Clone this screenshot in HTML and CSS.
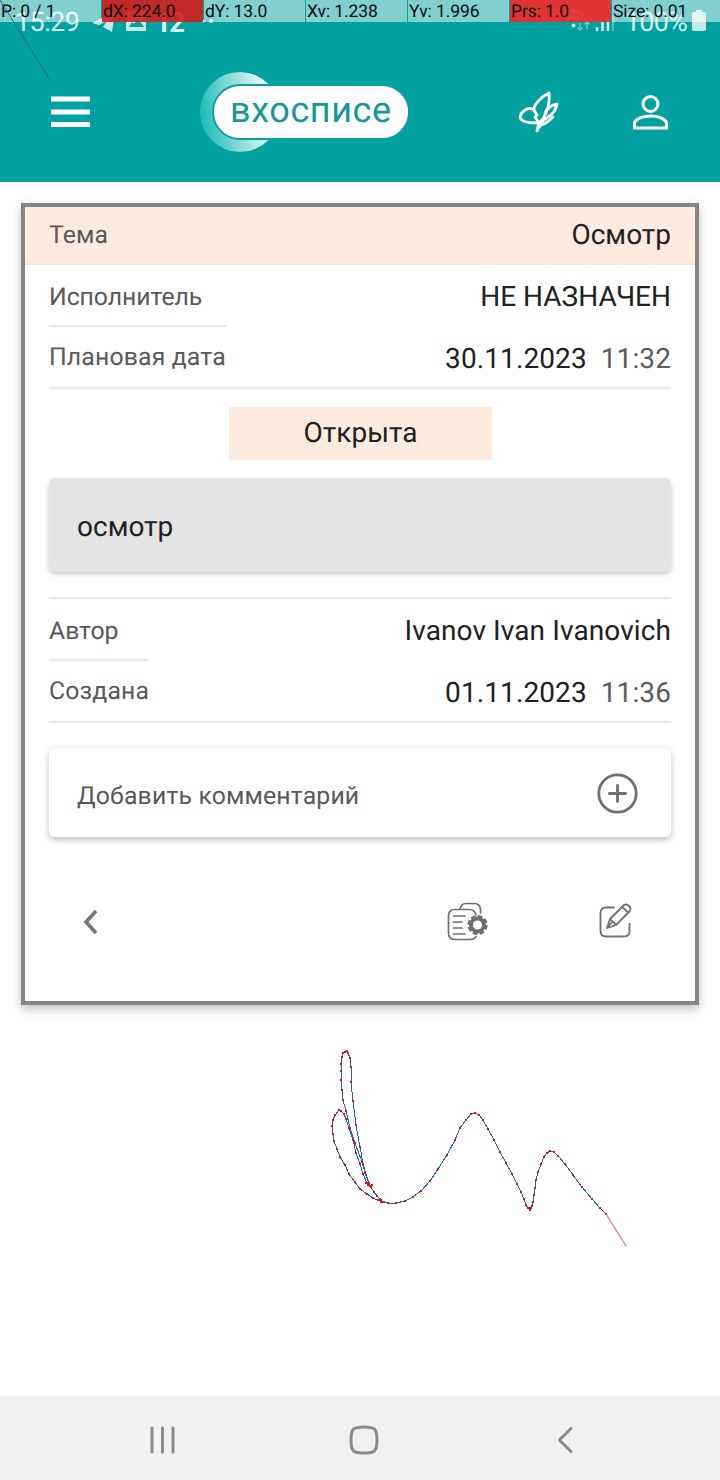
FILE: index.html
```html
<!DOCTYPE html>
<html lang="ru">
<head>
<meta charset="utf-8">
<title>вхосписе</title>
<link rel="stylesheet" href="styles.css">
</head>
<body>
<div class="screen">
  <header class="top">
    <div class="status">
      <span class="clock">15:29</span>
      <svg class="status-left" width="130" height="44" viewBox="0 0 130 44">
        <path d="M2 23 25 12 22 32 13 27 17 21 9 25Z" fill="#c5e9e8"/>
        <path d="M36 11h20v20H36zM39 27h15l-6-8-4 5-2-2z" fill="#c5e9e8" fill-rule="evenodd"/>
        <circle cx="113" cy="21" r="1.5" fill="#d5eeee"/><circle cx="121" cy="21" r="2" fill="#d5eeee"/>
      </svg>
      <b class="temp">12</b>
      <svg class="status-right" width="60" height="44" viewBox="0 0 60 44" fill="none" stroke="#d5eeee">
        <g stroke-width="2.5" opacity=".65"><path d="M2 16q11-10 22 0M6 20q7-6 14 0"/></g>
        <circle cx="13.500" cy="25.500" r="2" fill="#d5eeee" stroke="none"/>
        <path d="M20 23v7m-2.500-2.500L20 30l2.500-2.500M27 29v-7m-2.500 2.500L27 22l2.500 2.500" stroke-width="1.500" opacity=".5"/>
        <path d="M37 27v4M42.500 22v9M48 18v13" stroke-width="2.500"/>
        <path d="M53 15v16" stroke-width="2" opacity=".4"/>
      </svg>
      <span class="percent">100%</span>
      <svg class="battery" width="14" height="44" viewBox="0 0 14 44"><path d="M4 10h6v2h2q2 0 2 2v15q0 2-2 2H2q-2 0-2-2V14q0-2 2-2h2z" fill="#c5e9e8"/></svg>
    </div>
    <nav class="bar">
      <svg class="menu" width="40" height="32" viewBox="0 0 40 32"><path d="M0 3h39M0 16h39M0 28.500h39" stroke="#fff" stroke-width="5"/></svg>
      <div class="logo">
        <svg class="logo-shape" width="210" height="82" viewBox="0 0 210 82">
          <defs><linearGradient id="moon" x1="0" x2="1" y1=".6" y2=".4"><stop offset="0" stop-color="#16bbb8"/><stop offset=".45" stop-color="#7fd6d2"/><stop offset="1" stop-color="#eefafa"/></linearGradient></defs>
          <path d="M69 12.500A40 40 0 1 0 69 67.500Z" fill="url(#moon)"/>
          <rect x="13" y="13" width="196" height="54" rx="27" fill="#fff" stroke="#00a19e" stroke-width="1.800"/>
        </svg>
        <span class="logo-text">вхосписе</span>
      </div>
      <svg class="butterfly" width="42" height="44" viewBox="0 0 42 44" fill="none" stroke="#fff" stroke-width="2.800" stroke-linejoin="round" stroke-linecap="round">
        <path d="M14 19C9 17 3 22 2 27c1 5 8 6 16 6M16 21C15 15 23 7 31 3c1 9-1 17-5 24l-4 5M16 20l3 5-2 2 4 6M27 23c2-4 6-8 12-9-1 6-4 10-9 13l-9 7M21 32l-2 9M19 40l4-5c5-1 8-4 12-8"/>
      </svg>
      <svg class="user" width="36" height="38" viewBox="0 0 36 38" fill="none" stroke="#fff" stroke-width="3"><circle cx="17.500" cy="10" r="7.500"/><path d="M1.500 34v-5.500Q5.500 22 17.500 22T33.500 28.500V34Z"/></svg>
    </nav>
    <div class="pointer-bar">
      <span>P: 0 / 1</span><span class="hot dark">dX: 224.0</span><span>dY: 13.0</span><span>Xv: 1.238</span><span>Yv: 1.996</span><span class="hot">Prs: 1.0</span><span>Size: 0.01</span>
    </div>
  </header>

  <main class="content">
    <section class="card">
      <div class="theme"><span class="label">Тема</span><span class="value">Осмотр</span></div>
      <div class="body">
        <div class="facts">
          <div class="label key">Исполнитель</div><div class="value">НЕ НАЗНАЧЕН</div>
          <div class="label">Плановая дата</div><div class="value date">30.11.2023<span class="time">11:32</span></div>
        </div>
        <div class="state">Открыта</div>
        <div class="note">осмотр</div>
        <div class="facts created">
          <div class="label key">Автор</div><div class="value date">Ivanov Ivan Ivanovich</div>
          <div class="label">Создана</div><div class="value date">01.11.2023<span class="time">11:36</span></div>
        </div>
        <div class="comment"><span class="label">Добавить комментарий</span>
          <svg width="42" height="42" viewBox="0 0 42 42" fill="none" stroke="#707070" stroke-width="2.800" stroke-linecap="round"><circle cx="20.500" cy="20.500" r="18.700"/><path d="M12.500 20.500h16M20.500 12.500v16"/></svg>
        </div>
        <div class="actions">
          <svg class="back" width="18" height="28" viewBox="0 0 18 28" fill="none" stroke="#757575" stroke-width="3.600"><path d="M14 3 4 14l10 11"/></svg>
          <svg class="docs" width="42" height="42" viewBox="0 0 42 42" fill="none" stroke="#6f6f6f" stroke-width="1.700" stroke-linecap="round">
            <path d="M13 7q1-5.500 6-5.500h8q6.500 0 6.500 6.500v3M29 13Q28 7.500 22 7.500H8q-6.500 0-6.500 6.500v17q0 6.500 6.500 6.500h14q6 0 7-3M6.500 14H18M6.500 20h8.500M6.500 26h8.500M6.500 32H18"/>
            <circle cx="30.500" cy="23" r="6.500" stroke-width="3.800"/><circle cx="30.500" cy="23" r="8.700" stroke-width="2.800" stroke-dasharray="4.600 2.233" stroke-linecap="butt"/>
          </svg>
          <svg class="edit" width="34" height="36" viewBox="0 0 34 36" fill="none" stroke="#707070" stroke-width="1.800" stroke-linejoin="round">
            <path d="M15.500 4.500H7Q1.500 4.500 1.500 10v18q0 5.500 5.500 5.500h18q5.500 0 5.500-5.500v-8M8 25l3-9L24 3q3-3 6 0t0 6L17 22ZM11 16l6 6M23.500 4l5.500 5.500M13.500 18.500 8 25"/>
          </svg>
        </div>
      </div>
    </section>
  </main>

  <footer class="nav">
    <svg width="28" height="28" viewBox="0 0 28 28" stroke="#8a8a8a" stroke-width="3" stroke-linecap="round"><path d="M3 2v24M13.500 2v24M24 2v24"/></svg>
    <svg width="30" height="30" viewBox="0 0 30 30" fill="none" stroke="#8a8a8a" stroke-width="3"><path d="M15 2q8 0 10.500 2.200T28 15t-2.500 10.800T15 28 4.500 25.800 2 15 4.500 4.200 15 2Z"/></svg>
    <svg width="18" height="28" viewBox="0 0 18 28" fill="none" stroke="#8a8a8a" stroke-width="3" stroke-linecap="round" stroke-linejoin="round"><path d="M15 2.500 3.500 14 15 25.500"/></svg>
  </footer>

  <svg class="trace" width="720" height="1480" viewBox="0 0 720 1480" fill="none">
    <defs><marker id="dot" markerUnits="userSpaceOnUse" markerWidth="2" markerHeight="2" refX="1" refY="1"><rect width="2" height="2" fill="#e01018"/></marker></defs>
    <path d="M0 0 50 80" stroke="#2f5f9f"/>
    <g stroke="#2464b4" shape-rendering="crispEdges" marker-start="url(#dot)" marker-mid="url(#dot)" marker-end="url(#dot)">
      <polyline points="382,1202 373,1198 367,1194 360,1189 355,1182 349,1174 345,1165 340,1157 337,1149 334,1141 333,1134 332,1126 333,1120 335,1115 339,1110 341,1111 344,1114 346,1119 349,1128 353,1140 356,1153 360,1164 363,1174 367,1183 369,1185 368,1185 370,1186 365,1173 362,1162 355,1143 350,1128 346,1111 343,1100 342,1090 341,1080 341,1071 341,1064 342,1057 343,1053 345,1052 347,1051 348,1053 350,1058 351,1067 351,1082 353,1101 356,1125 360,1147 364,1168 369,1183 371,1187 374,1192 377,1196 380,1199 381,1201 382,1202 388,1203 396,1203 405,1201 413,1197 421,1191 430,1181 438,1169 447,1155 455,1140 460,1128 466,1120 471,1114 475,1113 479,1115 483,1120 488,1129 494,1140 500,1152 506,1163 512,1174 517,1184 521,1192 524,1199 526,1205 528,1208 530,1210 532,1206 533,1202 534,1195 535,1188 536,1180 538,1172 541,1164 544,1157 547,1153 550,1151 554,1152 558,1156 565,1164 573,1175 582,1187 592,1199 600,1208 606,1214"/>
      <path d="M366 1183h2l1 2h3M529 1208h2M379 1200h2v2h3"/>
    </g>
    <path d="M606 1214 626 1246" stroke="#e96d8f" stroke-width="1.300"/>
  </svg>
</div>
</body>
</html>
```

FILE: styles.css
```css
* { box-sizing: border-box; }
body { margin: 0; background: #fff; font-family: Roboto, "Noto Sans", sans-serif; color: #212121; text-rendering: geometricPrecision; }
svg { display: block; flex: none; }
.screen { position: relative; width: 720px; height: 1480px; display: flex; flex-direction: column; overflow: hidden; }
.top { position: relative; height: 182px; background: #00a19e; flex: none; }
.status { height: 44px; display: flex; padding: 0 14px 0 15px; color: #d5eeee; font-size: 27px; line-height: 45px; }
.status > * { flex: none; }
.clock { width: 75px; white-space: nowrap; letter-spacing: -.6px; }
.temp { width: 30px; font-size: 28px; letter-spacing: -2px; }
.status-left + .temp { margin-left: -65px; }
.status-right { margin-left: 375px; }
.percent { width: 66px; margin-left: 5px; letter-spacing: -.8px; white-space: nowrap; }
.battery { margin-left: 1px; }
.bar { height: 138px; display: flex; align-items: flex-start; padding-left: 51px; }
.menu { margin-top: 52px; }
.logo { display: grid; margin: 28px 0 0 109px; width: 210px; }
.logo-shape, .logo-text { grid-area: 1 / 1; }
.logo-text { padding: 16px 0 0 30px; font-size: 36px; line-height: 44px; letter-spacing: .6px; color: #14989a; z-index: 1; }
.butterfly { margin: 46px 0 0 108px; }
.user { margin: 50px 0 0 73px; }
.pointer-bar { position: absolute; top: 0; left: 0; width: 720px; height: 22px; display: grid; grid-template-columns: repeat(7, 101px); column-gap: 1px; font-size: 17.500px; line-height: 24px; color: #080f0f; }
.pointer-bar span { height: 22px; padding-left: 1px; white-space: nowrap; background: rgba(255,255,255,.5); letter-spacing: -.1px; }
.pointer-bar span:last-child { width: 108px; }
.pointer-bar .hot { background: rgba(242,45,45,.93); }
.pointer-bar .dark { background: rgba(210,32,32,.92); }
.content { padding: 21px 21px 0; flex: 1; }
.card { height: 802px; border: 4px solid #858585; box-shadow: 0 4px 9px rgba(0,0,0,.25); }
.theme { height: 58px; padding: 0 24px; display: flex; justify-content: space-between; background: #feebe0; border-bottom: 2px solid #e9e9e9; line-height: 55px; }
.theme .label { line-height: 57px; }
.label { font-size: 24.800px; color: #595959; letter-spacing: .15px; }
.key { letter-spacing: -.05px; }
.value { font-size: 28px; text-align: right; }
.date { letter-spacing: .1px; }
.body { padding: 0 24px; }
.facts { display: grid; grid-template-columns: max-content 1fr; grid-template-rows: 62px 62px; border-bottom: 2px solid #e9e9e9; height: 124px; line-height: 63px; }
.facts .key { border-bottom: 2px solid #e9e9e9; line-height: 65px; }
.facts .label:nth-child(3) { line-height: 61px; }
.time { margin-left: 14px; color: #5c5c5c; }
.state { width: 263px; height: 53px; margin: 18px auto 0; padding-left: 1px; background: #feebe0; text-align: center; font-size: 28px; line-height: 52px; }
.note { height: 94px; margin-top: 18px; padding-left: 28px; line-height: 97px; font-size: 28px; border-radius: 6px; background: #e4e4e4; box-shadow: 0 2px 5px rgba(0,0,0,.22); }
.created { margin-top: 25px; height: 126px; border-top: 2px solid #e9e9e9; }
.comment { height: 89px; margin-top: 25px; padding: 2px 32px 0 28px; display: flex; justify-content: space-between; align-items: center; border-radius: 6px; box-shadow: 0 3px 7px rgba(0,0,0,.25); }
.comment .label { padding-top: 6px; }
.actions { display: flex; align-items: flex-start; padding: 65px 0 0 33px; }
.back { margin-top: 6px; }
.docs { margin-left: 347px; }
.edit { margin-left: 110px; margin-top: 1px; }
.nav { height: 84px; flex: none; display: flex; align-items: center; justify-content: space-between; padding: 3px 146px 0 149px; background: #f1f1f1; }
.nav svg:nth-child(2) { margin-right: 6px; }
.trace { position: absolute; inset: 0; pointer-events: none; }
```
